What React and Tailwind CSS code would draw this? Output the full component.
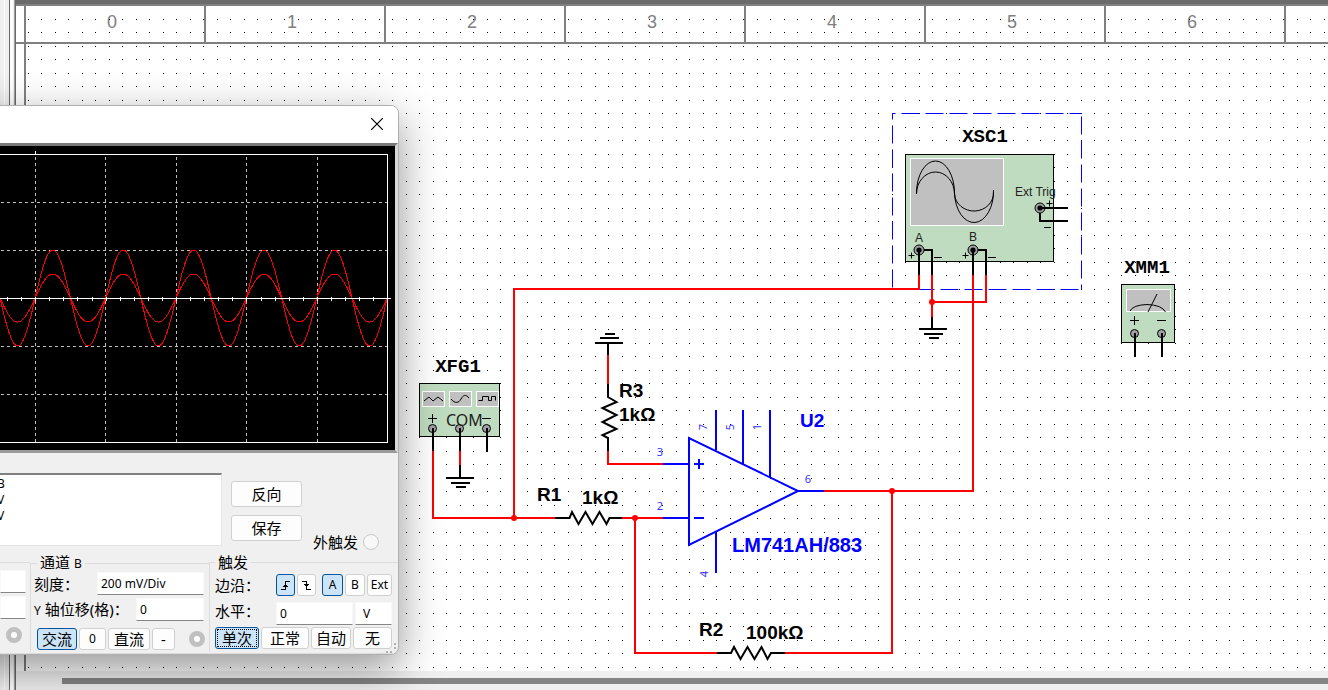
import { useState } from 'react';
import clsx from 'clsx';

const columns = ['0', '1', '2', '3', '4', '5', '6', ''];

const PERIOD = 70.4;
const AXIS_Y = 152;

// Sine trace drawn on the scope screen
const trace = (amplitude) => {
  let d = '';
  for (let x = 0; x <= 387; x += 1) {
    const y = AXIS_Y - amplitude * Math.sin(((x - 35.2) / PERIOD) * 2 * Math.PI);
    d += `${x === 0 ? 'M' : 'L'}${x} ${y.toFixed(1)}`;
  }
  return d;
};

const ticks = Array.from({ length: 28 }, (_, i) => Math.round(i * 14.08 - 7) + 0.5);

function Panel({ x, y, width, height }) {
  return <rect x={x + 0.5} y={y + 0.5} width={width} height={height} fill="#c0dcc0" stroke="#000" />;
}

function Screen({ x, y, width, height }) {
  return <rect x={x + 0.5} y={y + 0.5} width={width} height={height} fill="#c0c0c0" stroke="#fff" />;
}

function Terminal({ x, y, dot }) {
  return (
    <g>
      <circle cx={x} cy={y} r={dot ? 5 : 4} fill="#a0a0a4" stroke="#000" />
      {dot && <circle cx={x} cy={y} r="2.6" fill="#000" />}
    </g>
  );
}

function Ground({ x, y, flip }) {
  const s = flip ? -1 : 1;
  return (
    <path
      d={`M${x - 14} ${y}h28M${x - 9} ${y + 5 * s}h19M${x - 4} ${y + 9 * s}h10`}
      stroke="#000"
      strokeWidth="2"
      fill="none"
    />
  );
}

function Schematic() {
  return (
    <svg className="absolute inset-0 h-full w-full" role="img" aria-label="Schematic">
      <defs>
        <pattern id="grid" x="28" y="19" width="27" height="27" patternUnits="userSpaceOnUse">
          <path d="M0 0h1v1h-1zM13 0h1v1h-1zM0 13h1v1h-1zM13 13h1v1h-1z" fill="#000" />
        </pattern>
      </defs>
      <g transform="translate(-16 -6)">
        <rect x="28" y="19" width="100%" height="650" fill="url(#grid)" />

        {/* Selection around XSC1 */}
        <g stroke="#0000ff" fill="none" strokeDasharray="18 6">
          <path d="M892.5 113.5H1081.5" strokeDashoffset="15" />
          <path d="M892.5 289.5H1081.5" />
          <path d="M892.5 113.5V289.5" strokeDashoffset="12" />
          <path d="M1081.5 113.5V289.5" strokeDashoffset="21" />
        </g>

        {/* Instrument bodies */}
        <Panel x={905} y={154} width={148} height={107} />
        <Screen x={910} y={158} width={93} height={67} />
        <g fill="none" stroke="#000">
          <path d="M916.5 193A19 32 0 0 1 954.5 193A19.5 31 0 0 0 993.5 190" />
          <path d="M916.5 194A19 22 0 0 1 954.5 194A19.5 18 0 0 0 993.5 192" />
        </g>
        <Panel x={1121} y={284} width={53} height={58} />
        <Screen x={1126} y={289} width={44} height={22} />
        <g fill="none" stroke="#000">
          <path d="M1130 311Q1133 305 1147 304.500Q1162 305 1165.500 312M1148 312L1157 294" />
        </g>
        <Panel x={419} y={383} width={80} height={53} />
        <Screen x={422} y={391} width={22} height={15} />
        <Screen x={449} y={391} width={22} height={15} />
        <Screen x={476} y={391} width={22} height={15} />
        <g fill="none" stroke="#000">
          <path d="M424 401L429 397L433 401L438 397L443 401" />
          <path d="M451 399C455 404 459 403 461 399S466 394 469 398" />
          <path d="M478.500 400.500H482.500V396.500H488.500V400.500H491.500V396.500H495.500V400.500" />
        </g>

        {/* Wires */}
        <g stroke="#ff0000" strokeWidth="2" fill="none">
          <path d="M433 451V518H555M514 518V289H919V275" />
          <path d="M460 451V466" />
          <path d="M608 355V384M608 451V464H663" />
          <path d="M622 518H663M635 518V653H717M785 653H892V491" />
          <path d="M824 491H973V275" />
          <path d="M932 275V318M932 302H986V275" />
        </g>
        <g fill="#ff0000">
          <circle cx="514" cy="518" r="3" />
          <circle cx="635" cy="518" r="3" />
          <circle cx="892" cy="491" r="3" />
          <circle cx="932" cy="302" r="3" />
        </g>

        {/* Terminals and their leads */}
        <Terminal x={919} y={250} dot />
        <Terminal x={973} y={250} dot />
        <Terminal x={1040} y={208} dot />
        <Terminal x={1134.5} y={333.5} />
        <Terminal x={1161.5} y={333.5} />
        <Terminal x={432.5} y={428.5} />
        <Terminal x={459.5} y={428.5} />
        <Terminal x={486.5} y={428.5} />
        <g stroke="#000" strokeWidth="2" fill="none">
          <path d="M919 250V275M924 250H932V275M973 250V275M978 250H986V275" />
          <path d="M1040 208H1068M1040 213V221H1068" />
          <path d="M1135 333V357M1162 333V357" />
          <path d="M433 428V451M460 428V451M487 428V452" />
          <path d="M460 465V478M932 317V329M608 343V355" />
        </g>
        <Ground x={933} y={329} />
        <Ground x={460} y={478} />
        <Ground x={609} y={343} flip />
        <g stroke="#000" fill="none">
          <path d="M908.500 255.500h6M911.500 252.500v6M934 257.500h8" />
          <path d="M962.500 255.500h6M965.500 252.500v6M988 257.500h8" />
          <path d="M1046.500 203.500h6M1049.500 200.500v6M1044 227.500h7" />
          <path d="M1130 320.500h9M1134.500 316v9M1157 320.500h9" />
          <path d="M428 418.500h9M432.500 414v9M482 418.500h9" />
        </g>

        {/* Resistors */}
        <g stroke="#000" strokeWidth="2" fill="none">
          <path d="M555 518H569.500L572 512L578.500 524L585.500 512L592.500 524L599.500 512L606.500 524L609.500 518H622" />
          <path d="M717 653H731L734 647L740.500 659L747.500 647L754.500 659L761.500 647L767.500 659L771 653H785" />
          <path d="M608 384V397L616.500 402L602.500 408L616.500 415L602.500 422L616.500 429L602.500 435L608 438V451" />
        </g>

        {/* Op amp */}
        <g stroke="#0000ff" strokeWidth="2" fill="none">
          <path d="M689 438V545L798 491Z" />
          <path d="M663 464H689M663 518H689M798 491H824" />
          <path d="M716 410V450M743 410V464M770 410V478M716 532V573" />
          <path d="M694 464h10M699 459v10M694 518h10" />
        </g>

        <g fontFamily='"Noto Sans", sans-serif' fontSize="11" fill="#3333ff" textAnchor="middle">
          <text x="660" y="456">3</text>
          <text x="660" y="510">2</text>
          <text x="808" y="483">6</text>
          <text transform="translate(707 427) rotate(-90)">7</text>
          <text transform="translate(734 427) rotate(-90)">5</text>
          <text transform="translate(761 427) rotate(-90)">1</text>
          <text transform="translate(708 574) rotate(-90)">4</text>
        </g>

        {/* Reference names and values */}
        <g fontFamily='"Liberation Sans", Arial, sans-serif' fontSize="19" fontWeight="700">
          <text x="619" y="397">R3</text>
          <text x="619" y="421">1kΩ</text>
          <text x="537" y="501">R1</text>
          <text x="582" y="504">1kΩ</text>
          <text x="699" y="636">R2</text>
          <text x="746" y="639">100kΩ</text>
          <text x="800" y="427" fill="#0000ff">U2</text>
          <text x="732" y="552" fontSize="20" fill="#0000ff">LM741AH/883</text>
        </g>
        <g
          fontFamily='"Liberation Mono", "Courier New", monospace'
          fontSize="19"
          fontWeight="700"
          textAnchor="middle"
        >
          <text x="985" y="142">XSC1</text>
          <text x="1147" y="273">XMM1</text>
          <text x="458" y="372">XFG1</text>
        </g>
        <g fontFamily='"Liberation Sans", Arial, sans-serif' fontSize="12" fill="#222">
          <text x="1015" y="196">Ext Trig</text>
          <text x="915" y="242">A</text>
          <text x="969" y="241">B</text>
        </g>
        <text x="446" y="426" fontFamily='"Noto Sans", sans-serif' fontSize="16" fill="#222">
          COM
        </text>
      </g>
    </svg>
  );
}

function ScopeScreen() {
  return (
    <div className="border-t-3 border-r-3 border-b-3 border-t-[#7a7a7a] border-r-[#d8d8d8] border-b-[#9a9a9a]">
      <svg className="block h-[304px] w-full bg-black" shapeRendering="crispEdges" role="img" aria-label="Oscilloscope">
        <g stroke="#c0c0c0" fill="none" strokeDasharray="3 3">
          <path d="M35.500 11V296M105.500 11V296M176.500 11V296M246.500 11V296M317.500 11V296" />
          <path d="M1 56.500H387M1 104.500H387M1 200.500H387M1 248.500H387" />
        </g>
        <g stroke="#ff0000" fill="none">
          <path d={trace(48)} />
          <path d={trace(24)} />
        </g>
        <g stroke="#fff" fill="none">
          <path d="M0 8.500H387.500V296.500H0M35.500 5V9M0 152.500H391" />
          {ticks.map((x) => (
            <path key={x} d={`M${x} 151V155`} />
          ))}
        </g>
      </svg>
    </div>
  );
}

function Btn({ active, className, ...props }) {
  return (
    <button
      type="button"
      className={clsx(
        'flex h-[22px] items-center justify-center rounded-[3px] border whitespace-nowrap',
        active ? 'border-[#005499] bg-[#cce4f7]' : 'border-[#d0d0d0] bg-[#fdfdfd]',
        className
      )}
      {...props}
    />
  );
}

function Field({ className, ...props }) {
  return (
    <input
      className={clsx(
        'h-[23px] min-w-0 border border-[#f8f8f8] border-b-[#868686] bg-white px-[3px] text-[12px] outline-none',
        className
      )}
      {...props}
    />
  );
}

function Knob(props) {
  return (
    <input
      type="radio"
      className="h-4 w-4 shrink-0 appearance-none rounded-full border-5 border-[#c0c0c0] bg-white"
      {...props}
    />
  );
}

function Oscilloscope() {
  const [coupling, setCoupling] = useState('交流');
  const [source, setSource] = useState('A');
  const [mode, setMode] = useState('单次');
  const [edge, setEdge] = useState('rise');

  return (
    <div
      role="dialog"
      aria-label="Oscilloscope"
      className="absolute top-[105px] -left-20 w-[479px] overflow-hidden rounded-lg border border-[#b0b0b0] bg-[#f0f0f0] pl-[79px] shadow-[0_14px_44px_rgba(0,0,0,0.42)]"
    >
      {/* Title bar */}
      <div className="-ml-20 flex h-[37px] items-center justify-end bg-white pr-[7px] pb-[2px]">
        <button type="button" aria-label="Close" className="flex h-7 w-7 items-center justify-center">
          <svg width="12" height="12" viewBox="0 0 12 12" stroke="#000" strokeWidth="1.2">
            <path d="M0 0L12 12M12 0L0 12" />
          </svg>
        </button>
      </div>

      <ScopeScreen />

      {/* Readings */}
      <div className="flex h-[101px] pt-5">
        <div className="h-[73px] w-[222px] border-t-2 border-r border-b border-t-[#808080] border-r-[#e3e3e3] border-b-[#e3e3e3] bg-white pt-px text-[12px] leading-4">
          {['B', 'V', 'V'].map((unit, i) => (
            <div key={i} className="-ml-[3px]">
              {unit}
            </div>
          ))}
        </div>
        <div className="ml-[9px] flex w-[71px] flex-col gap-2 pt-2">
          <Btn className="h-[26px] pb-px">反向</Btn>
          <Btn className="h-[26px] pb-px">保存</Btn>
        </div>
        <label className="ml-[11px] flex items-center gap-[5px] self-end pb-[2px]">
          外触发
          <input
            type="radio"
            name="ext"
            className="h-4 w-4 appearance-none rounded-full border border-[#c8c8c8] bg-[#f8f8f8]"
          />
        </label>
      </div>

      {/* Channel and trigger settings */}
      <div className="grid grid-cols-[30px_179px_1fr] border-b border-[#dcdcdc] pb-px">
        <div className="mt-2 border-t border-[#dcdcdc] pt-[7px]">
          <div className="flex w-[26px] flex-col gap-[3px]">
            <Field aria-label="A scale" />
            <Field aria-label="A offset" />
          </div>
          <div className="flex pt-2 pl-[6px]">
            <Knob name="chA" aria-label="Channel A" />
          </div>
        </div>

        <fieldset className="min-w-0 border-t border-l border-[#dcdcdc] pl-[3px]">
          <legend className="ml-[3px] px-[3px] leading-4">
            通道 <span className="text-[12px]">B</span>
          </legend>
          <div className="flex items-center justify-between pr-[5px]">
            <label htmlFor="scale">刻度：</label>
            <Field id="scale" defaultValue="200 mV/Div" className="w-[107px]" />
          </div>
          <div className="mt-[3px] flex items-center justify-between pr-[5px]">
            <label htmlFor="offset" className="whitespace-nowrap">
              <span className="text-[12px]">Y</span> 轴位移(格)：
            </label>
            <Field id="offset" defaultValue="0" className="w-[68px]" />
          </div>
          <div className="mt-[7px] flex items-center gap-[2px] pr-1 pl-[3px]">
            <Btn active={coupling === '交流'} onClick={() => setCoupling('交流')} className="w-10">
              交流
            </Btn>
            <Btn active={coupling === '0'} onClick={() => setCoupling('0')} className="w-[27px] text-[12px]">
              0
            </Btn>
            <Btn active={coupling === '直流'} onClick={() => setCoupling('直流')} className="w-[42px]">
              直流
            </Btn>
            <Btn active={coupling === '-'} onClick={() => setCoupling('-')} className="w-[23px]">
              -
            </Btn>
            <div className="ml-auto flex">
              <Knob name="chB" aria-label="Channel B" />
            </div>
          </div>
        </fieldset>

        <fieldset className="min-w-0 border-t border-l border-[#dcdcdc] pr-[6px] pl-[5px]">
          <legend className="px-[3px] leading-4">触发</legend>
          <div className="flex items-center pt-1">
            <span className="w-[61px]">边沿：</span>
            <div className="flex gap-[2px]">
              <Btn active={edge === 'rise'} onClick={() => setEdge('rise')} aria-label="Rising edge" className="w-[19px]">
                <svg width="11" height="11" viewBox="0 0 11 11" fill="none" stroke="#000" shapeRendering="crispEdges">
                  <path d="M1 9.500H5.500V1.500H10M3 6.500H8M4 5.500H7" />
                </svg>
              </Btn>
              <Btn active={edge === 'fall'} onClick={() => setEdge('fall')} aria-label="Falling edge" className="w-[19px]">
                <svg width="11" height="11" viewBox="0 0 11 11" fill="none" stroke="#000" shapeRendering="crispEdges">
                  <path d="M1 1.500H5.500V9.500H10M3 4.500H8M4 5.500H7" />
                </svg>
              </Btn>
            </div>
            <div className="ml-auto flex gap-[2px] text-[12px]">
              <Btn active={source === 'A'} onClick={() => setSource('A')} className="w-[21px]">
                A
              </Btn>
              <Btn active={source === 'B'} onClick={() => setSource('B')} className="w-5">
                B
              </Btn>
              <Btn active={source === 'Ext'} onClick={() => setSource('Ext')} className="w-[25px]">
                Ext
              </Btn>
            </div>
          </div>
          <div className="mt-[5px] flex items-center">
            <label htmlFor="level" className="w-[61px] pb-[5px]">
              水平：
            </label>
            <Field id="level" defaultValue="0" className="flex-1" />
            <Field aria-label="Unit" defaultValue="V" className="ml-[2px] w-[37px] pl-[7px]" />
          </div>
          <div className="mt-px mb-[3px] flex gap-[2px]">
            <Btn
              active={mode === '单次'}
              onClick={() => setMode('单次')}
              className="w-11 outline-1 -outline-offset-3 outline-dotted"
            >
              单次
            </Btn>
            <Btn active={mode === '正常'} onClick={() => setMode('正常')} className="w-12">
              正常
            </Btn>
            <Btn active={mode === '自动'} onClick={() => setMode('自动')} className="w-10">
              自动
            </Btn>
            <Btn active={mode === '无'} onClick={() => setMode('无')} className="flex-1">
              无
            </Btn>
          </div>
        </fieldset>
      </div>

      {/* Resize grip */}
      <svg className="absolute right-[2px] bottom-px" width="11" height="11" viewBox="0 0 11 11" fill="#b0b0b0">
        <path d="M9 1h2v2h-2zM9 5h2v2h-2zM5 9h2v2h-2zM1 9h2v2h-2z" />
      </svg>
    </div>
  );
}

export default function App() {
  return (
    <div className="relative flex h-screen flex-col overflow-hidden bg-[#f0f0f0] font-['Noto_Sans','Noto_Sans_CJK_SC',sans-serif] text-[15px] leading-5 text-black">
      <div className="flex min-h-0 flex-1">
        {/* Window edge */}
        <div className="flex w-4 shrink-0">
          <div className="w-1" />
          <div className="w-px bg-white" />
          <div className="w-1" />
          <div className="w-px bg-[#696969]" />
          <div className="w-[3px] bg-white" />
          <div className="w-px" />
          <div className="w-px bg-[#a0a0a0]" />
          <div className="w-px bg-[#696969]" />
        </div>

        <div className="flex min-w-0 flex-1 flex-col">
          <div className="h-1.5 shrink-0 border-b-2 border-[#808080] bg-[#6b6b6b]" />

          {/* Sheet */}
          <main className="relative min-h-0 flex-1 overflow-hidden bg-white">
            <div className="flex h-full flex-col">
              <div className="flex h-[38px] shrink-0 border-b-2 border-[#808080] pl-2">
                {columns.map((n, i) => (
                  <div
                    key={i}
                    className="w-[180px] shrink-0 border-l-2 border-[#808080] pt-1.5 pr-1.5 text-center font-['Liberation_Sans',sans-serif] text-[18px] leading-5 text-[#808080]"
                  >
                    {n}
                  </div>
                ))}
              </div>
              <div className="ml-2 flex-1 border-l-2 border-[#808080]" />
            </div>
            <Schematic />
          </main>

          {/* Horizontal scroll bar */}
          <div className="h-[19px] shrink-0 pt-[7px] pl-[46px]">
            <div className="h-1.5 bg-[#858585]" />
          </div>
        </div>
      </div>

      <Oscilloscope />
    </div>
  );
}
